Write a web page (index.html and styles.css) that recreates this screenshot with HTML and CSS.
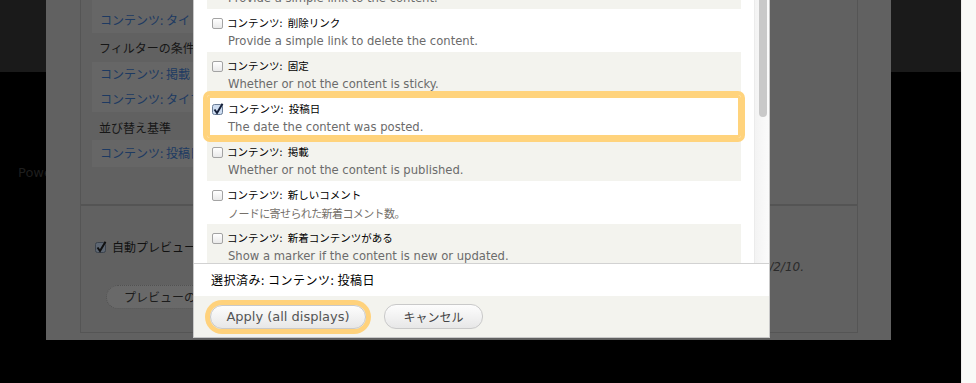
FILE: index.html
```html
<!DOCTYPE html>
<html lang="ja">
<head>
  <meta charset="UTF-8" />
  <title>Views - フィールドの追加</title>
  <link rel="stylesheet" href="styles.css">
</head>
<body>
  <div class="page">
    <header class="site-header"></header>
    <footer class="site-footer">Powered by Drupal</footer>
  </div>
  <div class="page-scrollbar"></div>

  <!-- dimmed views editor behind the dialog -->
  <div class="overlay">
    <div class="views-box">
      <div class="views-top">
        <div class="vrow vrow-first">コンテンツ: タイトル</div>
        <div class="vheading">フィルターの条件</div>
        <div class="vrow vrow-a">コンテンツ: 掲載 (はい)</div>
        <div class="vrow vrow-b">コンテンツ: タイプ (= 記事)</div>
        <div class="vheading vheading-sort">並び替え基準</div>
        <div class="vrow vrow-last">コンテンツ: 投稿日 (降順)</div>
      </div>
      <div class="views-bottom">
        <label class="auto-preview">
          <svg class="cb" width="12" height="13" viewBox="0 0 12 13"><rect x="0.5" y="1.5" width="10" height="10" rx="2" fill="#5d6672" stroke="#3b424c"/><path d="M2.5 6.5 L5 10 L10.5 0.8" fill="none" stroke="#101010" stroke-width="2"/></svg>
          自動プレビュー
        </label>
        <div class="vnote">最終更新日: 2012/2/10.</div>
        <div class="vbutton">プレビューの更新</div>
      </div>
    </div>
  </div>

  <div class="modal">
    <div class="modal-list">
      <div class="options">
        <div class="option alt">
          <div class="option-title"><span class="cb-empty"></span>コンテンツ: 編集リンク</div>
          <div class="option-desc">Provide a simple link to the content.</div>
        </div>
        <div class="option">
          <div class="option-title"><span class="cb-empty"></span>コンテンツ: 削除リンク</div>
          <div class="option-desc">Provide a simple link to delete the content.</div>
        </div>
        <div class="option alt">
          <div class="option-title"><span class="cb-empty"></span>コンテンツ: 固定</div>
          <div class="option-desc">Whether or not the content is sticky.</div>
        </div>
        <div class="option selected">
          <div class="option-title">
            <svg class="cb" width="12" height="13" viewBox="0 0 12 13"><rect x="0.5" y="1.5" width="10" height="10" rx="2" fill="#cddcf0" stroke="#6a7d96"/><path d="M2.5 6.5 L5 10 L10.5 0.8" fill="none" stroke="#15203a" stroke-width="2"/></svg>
            コンテンツ: 投稿日
          </div>
          <div class="option-desc">The date the content was posted.</div>
        </div>
        <div class="option alt">
          <div class="option-title"><span class="cb-empty"></span>コンテンツ: 掲載</div>
          <div class="option-desc">Whether or not the content is published.</div>
        </div>
        <div class="option">
          <div class="option-title"><span class="cb-empty"></span>コンテンツ: 新しいコメント</div>
          <div class="option-desc jp">ノードに寄せられた新着コメント数。</div>
        </div>
        <div class="option alt">
          <div class="option-title"><span class="cb-empty"></span>コンテンツ: 新着コンテンツがある</div>
          <div class="option-desc">Show a marker if the content is new or updated.</div>
        </div>
      </div>
      <div class="scrollbar"><div class="thumb"></div></div>
    </div>
    <div class="selected-summary">選択済み: コンテンツ: 投稿日</div>
    <div class="modal-footer">
      <button class="btn btn-primary">Apply (all displays)</button>
      <button class="btn btn-cancel">キャンセル</button>
    </div>
  </div>
</body>
</html>
```

FILE: styles.css
```css
* { box-sizing: border-box; }
body {
  margin: 0; height: 383px; background: #000; display: flex;
  overflow: hidden; position: relative;
  font-family: "DejaVu Sans", "Noto Sans CJK JP", sans-serif;
}
.page { flex: 1; }
.site-header { height: 72px; background: #1a1a1a; }
.site-footer {
  padding: 93px 0 0 18px; font-size: 13px; line-height: 16px; color: #1e1e1e;
}
.page-scrollbar { width: 15px; background: #f9f9f7; border-left: 1px solid #ededeb; }

/* dimmed editor */
.overlay {
  position: absolute; left: 46px; top: 0; width: 845px; height: 340px;
  background: #616161; padding: 0 33px 7px 34px;
}
.views-box {
  height: 100%; border: 1px solid #555; border-top: none;
  display: flex; flex-direction: column;
}
.views-top { height: 206px; padding: 0 11px; border-bottom: 2px solid #545454; }
.vrow {
  width: 300px; background: #666; color: #1d3a62; padding: 4px 8px 5px;
  font: 12px/16px "Noto Sans CJK JP", sans-serif;
}
.vrow-first { padding: 12px 8px 5px; }
.vrow-last { padding: 5px 8px 6px; }
.vheading {
  color: #161616; padding: 7px 7px 6px;
  font: 12px/16px "Noto Sans CJK JP", sans-serif;
}
.vheading-sort { padding: 8px 7px 4px; }
.views-bottom {
  flex: 1; padding: 33px 53px 0 14px; display: flex; flex-direction: column;
}
.auto-preview {
  display: flex; align-items: center; gap: 5px; height: 16px;
  font: 12px/16px "Noto Sans CJK JP", sans-serif; color: #111;
}
.vnote {
  margin-top: 4px; text-align: right; font-style: italic; font-size: 12px;
  line-height: 16px; color: #2a2a2a;
}
.vbutton {
  margin: 10px 0 0 11px; width: 160px; height: 24px; border-radius: 12px;
  background: #696969; border: 1px dotted #525252; color: #1c1c1c;
  padding-left: 17px; font: 12px/22px "Noto Sans CJK JP", sans-serif;
}

/* dialog */
.modal {
  position: absolute; left: 193px; top: -34px; width: 577px; z-index: 5;
  background: #fff; border: 1px solid #c8c8c8; border-top: none;
  display: flex; flex-direction: column;
}
.modal-list { height: 297px; display: flex; overflow: hidden; }
.options { flex: 1; padding: 0 13px; }
.option { height: 43px; padding: 6px 5px 0; position: relative; }
.option.alt { background: #f3f3ee; }
.option.selected {
  background: #fff; border-radius: 3px; z-index: 1;
  box-shadow: 0 0 0 4px #ffd37c, inset 0 0 0 3px #ffd37c;
}
.option-title {
  display: flex; align-items: center; gap: 4px; height: 16px; word-spacing: 3px;
  font: 10.5px/16px "Noto Sans CJK JP", sans-serif; color: #000;
}
.cb-empty {
  width: 11px; height: 11px; border: 1px solid #a3a3a3; border-radius: 2px;
  background: linear-gradient(#fff, #e9e9e9); flex-shrink: 0;
}
.cb { flex-shrink: 0; }
.option-desc {
  margin-top: 2px; padding-left: 16px; font-size: 11.6px; line-height: 16px;
  color: #6b6b6b; white-space: nowrap;
}
.option-desc.jp {
  font-family: "Noto Sans CJK JP", sans-serif; font-size: 11px; color: #75706a;
  letter-spacing: -0.6px;
}
.scrollbar {
  width: 15px; padding-left: 4px; border-left: 1px solid #ebebeb;
  background: linear-gradient(to right, #f3f3f3, #fbfbfb);
}
.thumb { width: 8px; height: 151px; background: #c9c9c9; border-radius: 0 0 4px 4px; }
.selected-summary {
  height: 33px; border-top: 1px solid #d2d2d2; padding-left: 17px;
  font: 12px/32px "Noto Sans CJK JP", sans-serif; color: #000; letter-spacing: 0.5px;
}
.modal-footer {
  height: 41px; background: #f3f3ee; display: flex; align-items: center;
  gap: 18px; padding-left: 16px;
}
.btn {
  height: 24px; border: 1px solid #c9c9c9; border-radius: 12px;
  background: linear-gradient(#fdfdfd, #e7e7e7); color: #555; padding: 0;
  font-family: "DejaVu Sans", sans-serif; font-size: 13px; white-space: nowrap;
}
.btn-primary { width: 156px; box-shadow: 0 0 0 5px #ffd27c; }
.btn-cancel {
  width: 99px; height: 25px; color: #444;
  font-family: "Noto Sans CJK JP", sans-serif; font-size: 12px;
}
```
